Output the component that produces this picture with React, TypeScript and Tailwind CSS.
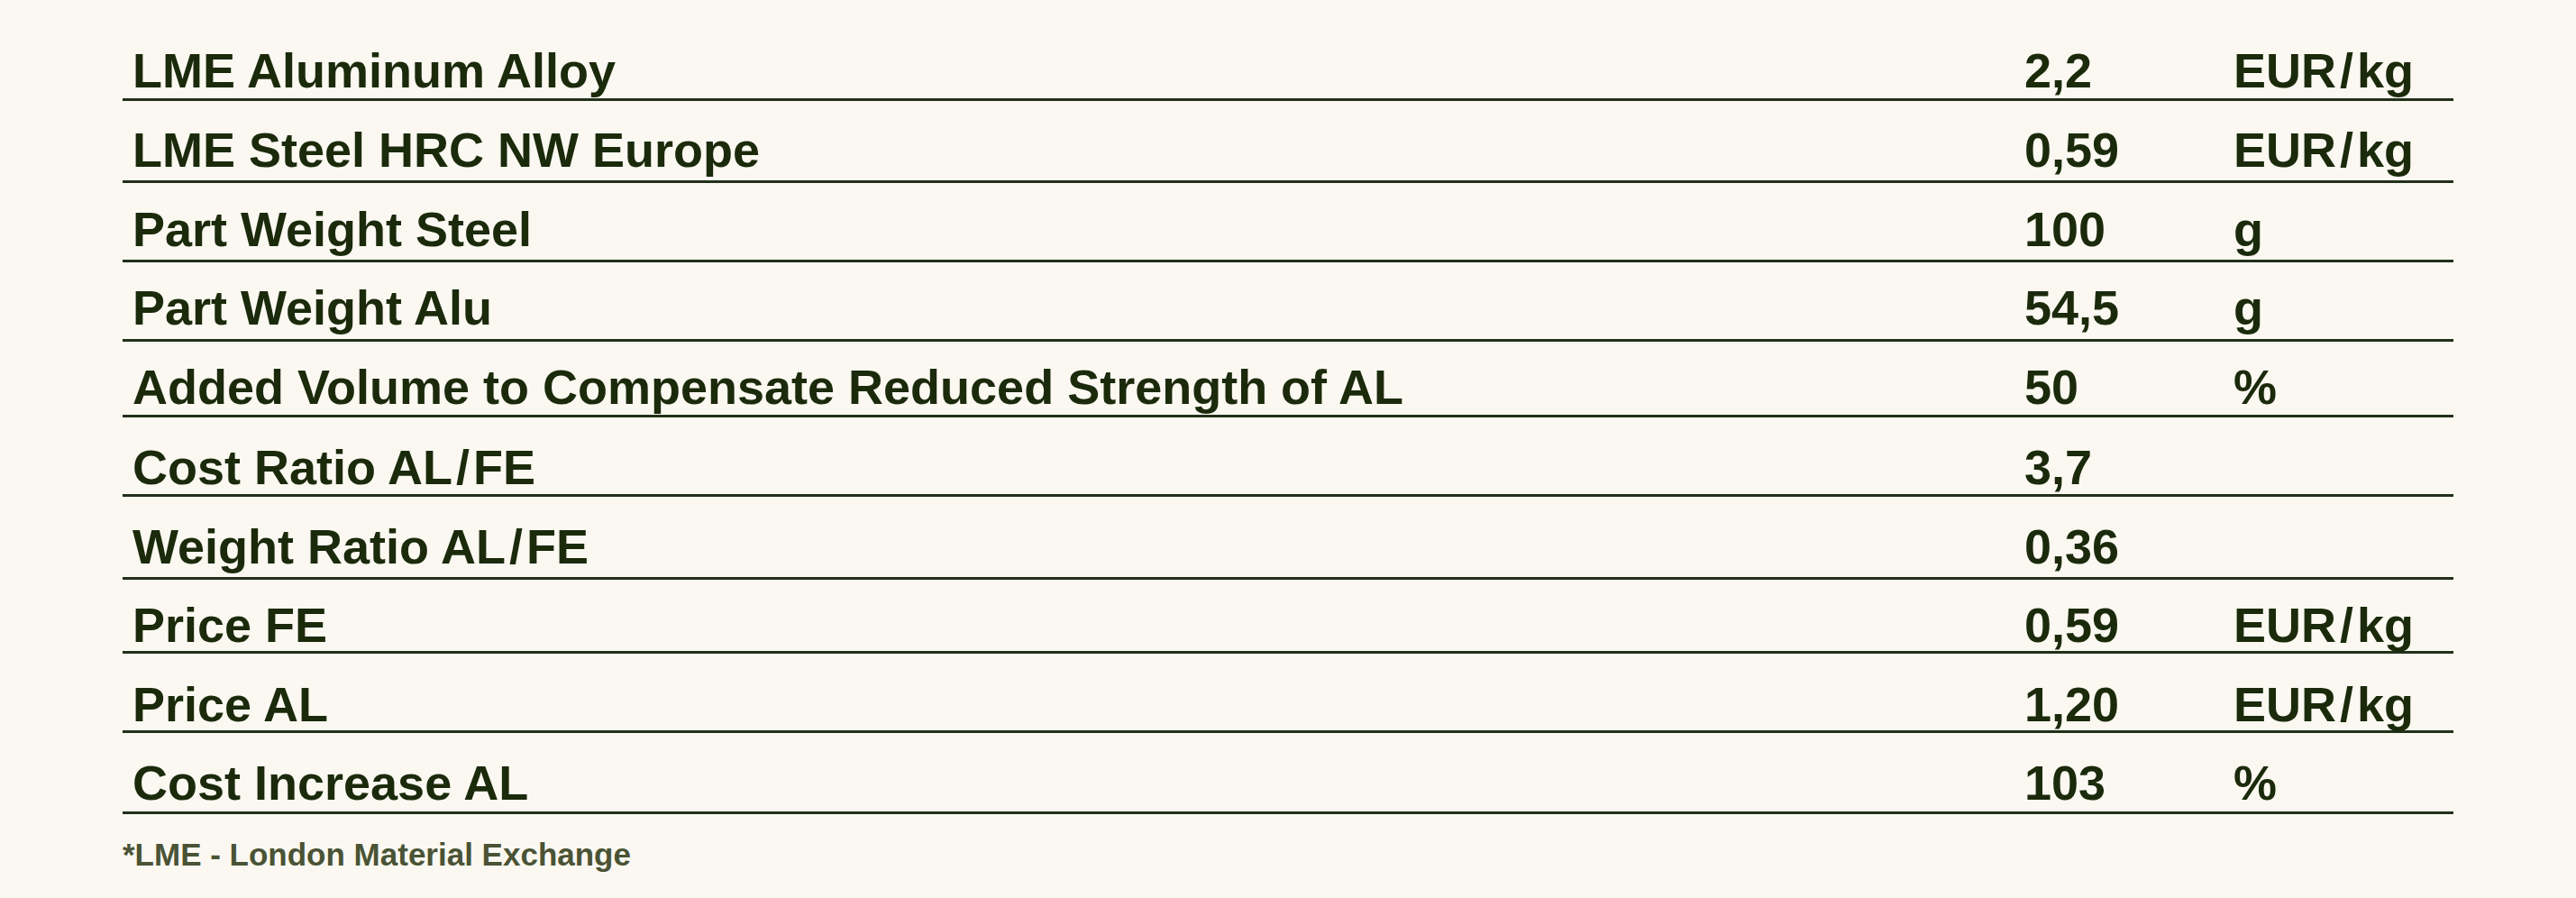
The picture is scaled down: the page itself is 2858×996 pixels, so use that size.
const rows = [
  { label: "LME Aluminum Alloy", value: "2,2", unit: "EUR/kg", pad: "pt-0 pb-[4px]" },
  { label: "LME Steel HRC NW Europe", value: "0,59", unit: "EUR/kg", pad: "pt-[27px] pb-[7px]" },
  { label: "Part Weight Steel", value: "100", unit: "g", pad: "pt-[24px] pb-[7px]" },
  { label: "Part Weight Alu", value: "54,5", unit: "g", pad: "pt-[23px] pb-[8px]" },
  { label: "Added Volume to Compensate Reduced Strength of AL", value: "50", unit: "%", pad: "pt-[23px] pb-[4px]" },
  { label: "Cost Ratio AL/FE", value: "3,7", unit: "", pad: "pt-[28px] pb-[3px]" },
  { label: "Weight Ratio AL/FE", value: "0,36", unit: "", pad: "pt-[28px] pb-[7px]" },
  { label: "Price FE", value: "0,59", unit: "EUR/kg", pad: "pt-[23px] pb-[2px]" },
  { label: "Price AL", value: "1,20", unit: "EUR/kg", pad: "pt-[29px] pb-[2px]" },
  { label: "Cost Increase AL", value: "103", unit: "%", pad: "pt-[28px] pb-[5px]" },
];

// the slash in the source font sits with some air on both sides
const Slashed = ({ text }: { text: string }) => {
  const parts = text.split("/");
  return (
    <>
      {parts.map((p, i) => (
        <span key={i}>
          {i > 0 && <span className="mx-[4px]">/</span>}
          {p}
        </span>
      ))}
    </>
  );
};

export default function App() {
  return (
    <div className="min-h-[996px] w-full bg-[#faf8f1] pt-[51px] font-['Liberation_Sans',Arial,sans-serif]">
      <div className="ml-[136px] w-[2586px]">
        {rows.map((r) => (
          <div
            key={r.label}
            className={`grid grid-cols-[2099px_232px_1fr] border-b-[3px] border-[#22301a] pl-[11px] text-[54px] font-bold leading-[54px] text-[#1b2a0b] ${r.pad}`}
          >
            <span className="whitespace-nowrap">
              <Slashed text={r.label} />
            </span>
            <span>{r.value}</span>
            <span className="whitespace-nowrap">
              <Slashed text={r.unit} />
            </span>
          </div>
        ))}
        <p className="mt-[27px] text-[35px] font-bold leading-[35px] text-[#4a5335]">
          *LME - London Material Exchange
        </p>
      </div>
    </div>
  );
}
